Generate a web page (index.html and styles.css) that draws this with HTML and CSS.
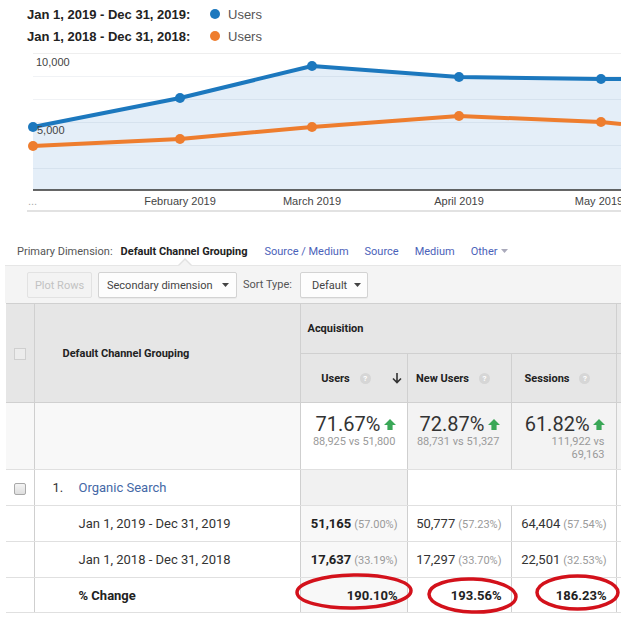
FILE: index.html
```html
<!DOCTYPE html>
<html>
<head>
<meta charset="utf-8">
<link rel="stylesheet" href="styles.css">
</head>
<body>
<div class="page">
  <div class="legend">
    <div class="legend-row"><span class="legend-label">Jan 1, 2019 - Dec 31, 2019:</span><span class="dot dot-blue"></span><span class="legend-series">Users</span></div>
    <div class="legend-row"><span class="legend-label">Jan 1, 2018 - Dec 31, 2018:</span><span class="dot dot-orange"></span><span class="legend-series">Users</span></div>
  </div>

  <svg class="chart" width="621" height="166" viewBox="0 47 621 166">
    <line class="grid-top" x1="33" y1="53.5" x2="621" y2="53.5"/>
    <polygon class="area" points="33,127 180,98 312,66 459,77 601,79 621,79 621,190 33,190"/>
    <line class="grid" x1="33" y1="76.5" x2="621" y2="76.5"/>
    <line class="grid" x1="33" y1="99.5" x2="621" y2="99.5"/>
    <line class="grid" x1="33" y1="122.5" x2="621" y2="122.5"/>
    <line class="grid" x1="33" y1="145.5" x2="621" y2="145.5"/>
    <line class="grid" x1="33" y1="168.5" x2="621" y2="168.5"/>
    <polyline class="line-orange" points="33,146 180,139 312,127 459,116 601,122 621,124"/>
    <polyline class="line-blue" points="33,127 180,98 312,66 459,77 601,79 621,79"/>
    <circle class="pt-orange" cx="33" cy="146" r="5"/>
    <circle class="pt-orange" cx="180" cy="139" r="5"/>
    <circle class="pt-orange" cx="312" cy="127" r="5"/>
    <circle class="pt-orange" cx="459" cy="116" r="5"/>
    <circle class="pt-orange" cx="601" cy="122" r="5"/>
    <circle class="pt-blue" cx="33" cy="127" r="5"/>
    <circle class="pt-blue" cx="180" cy="98" r="5"/>
    <circle class="pt-blue" cx="312" cy="66" r="5"/>
    <circle class="pt-blue" cx="459" cy="77" r="5"/>
    <circle class="pt-blue" cx="601" cy="79" r="5"/>
    <line class="axis" x1="33" y1="190" x2="621" y2="190"/>
    <text class="y-label" x="36" y="66">10,000</text>
    <text class="y-label" x="37" y="134">5,000</text>
    <text class="dots-label" x="28" y="205">...</text>
    <text class="x-label" x="180" y="205">February 2019</text>
    <text class="x-label" x="312" y="205">March 2019</text>
    <text class="x-label" x="459" y="205">April 2019</text>
    <text class="x-label" x="599" y="205">May 2019</text>
    <line class="axis-bottom" x1="27" y1="211" x2="621" y2="211"/>
  </svg>

  <div class="dims">
    <span class="dim-label">Primary Dimension:</span>
    <span class="dim-current">Default Channel Grouping</span>
    <span class="dim-link">Source / Medium</span>
    <span class="dim-link">Source</span>
    <span class="dim-link">Medium</span>
    <span class="dim-link">Other<svg class="dim-caret" width="7" height="4" viewBox="0 0 7 4"><path d="M0 0h7L3.5 4z"/></svg></span>
  </div>

  <div class="toolbar">
    <span class="btn btn-disabled">Plot Rows</span>
    <span class="btn btn-secondary">Secondary dimension<svg class="caret" width="7" height="4" viewBox="0 0 7 4"><path d="M0 0h7L3.5 4z"/></svg></span>
    <span class="sort-label">Sort Type:</span>
    <span class="btn btn-sort">Default<svg class="caret" width="7" height="4" viewBox="0 0 7 4"><path d="M0 0h7L3.5 4z"/></svg></span>
  </div>

  <table class="report">
    <colgroup>
      <col class="c-cb"><col class="c-dim"><col class="c-users"><col class="c-new"><col class="c-sess"><col class="c-extra">
    </colgroup>
    <thead>
      <tr class="h1">
        <th class="cb-head" rowspan="2"><span class="cb cb-head-box"></span></th>
        <th class="dim-head" rowspan="2">Default Channel Grouping</th>
        <th class="group" colspan="3">Acquisition</th>
        <th class="extra"></th>
      </tr>
      <tr class="h2">
        <th class="metric"><div class="mh mh-sorted"><span class="mh-label">Users<span class="help">?</span></span><svg class="sort-arrow" width="10" height="12" viewBox="0 0 10 12"><path d="M5 1v9.5M1 6.5l4 4 4-4"/></svg></div></th>
        <th class="metric"><div class="mh"><span class="mh-label">New Users<span class="help">?</span></span></div></th>
        <th class="metric"><div class="mh"><span class="mh-label">Sessions<span class="help">?</span></span></div></th>
        <th class="extra"></th>
      </tr>
    </thead>
    <tbody>
      <tr class="summary">
        <td class="sum-blank"></td>
        <td class="sum-blank"></td>
        <td class="sum sum-white"><div class="sum-main">71.67%<svg class="up" width="12" height="11" viewBox="0 0 12 11"><path d="M6 0l6 6H8.6v5H3.4V6H0z"/></svg></div><div class="sum-sub">88,925 vs 51,800</div></td>
        <td class="sum"><div class="sum-main">72.87%<svg class="up" width="12" height="11" viewBox="0 0 12 11"><path d="M6 0l6 6H8.6v5H3.4V6H0z"/></svg></div><div class="sum-sub">88,731 vs 51,327</div></td>
        <td class="sum"><div class="sum-main">61.82%<svg class="up" width="12" height="11" viewBox="0 0 12 11"><path d="M6 0l6 6H8.6v5H3.4V6H0z"/></svg></div><div class="sum-sub">111,922 vs<br>69,163</div></td>
        <td class="sum"></td>
      </tr>
      <tr class="item">
        <td class="cb-cell"><span class="cb cb-row"></span></td>
        <td class="dim"><span class="idx">1.</span><span class="item-link">Organic Search</span></td>
        <td class="val-grey"></td>
        <td class="blank-span" colspan="2"></td>
        <td class="extra-cell"></td>
      </tr>
      <tr class="data">
        <td class="cb-cell"></td>
        <td class="dim dim-indent">Jan 1, 2019 - Dec 31, 2019</td>
        <td class="val val-users"><b>51,165</b><span class="pct">(57.00%)</span></td>
        <td class="val">50,777<span class="pct">(57.23%)</span></td>
        <td class="val">64,404<span class="pct">(57.54%)</span></td>
        <td class="extra-cell"></td>
      </tr>
      <tr class="data">
        <td class="cb-cell"></td>
        <td class="dim dim-indent">Jan 1, 2018 - Dec 31, 2018</td>
        <td class="val val-users"><b>17,637</b><span class="pct">(33.19%)</span></td>
        <td class="val">17,297<span class="pct">(33.70%)</span></td>
        <td class="val">22,501<span class="pct">(32.53%)</span></td>
        <td class="extra-cell"></td>
      </tr>
      <tr class="change">
        <td class="cb-cell"></td>
        <td class="dim dim-indent dim-bold">% Change</td>
        <td class="val val-users val-bold">190.10%</td>
        <td class="val val-bold">193.56%</td>
        <td class="val val-bold">186.23%</td>
        <td class="extra-cell"></td>
      </tr>
    </tbody>
  </table>

  <svg class="marks" width="621" height="617" viewBox="0 0 621 617">
    <ellipse cx="354" cy="591.5" rx="57" ry="16.5" transform="rotate(-1 354 591.5)"/>
    <ellipse cx="472.5" cy="595.5" rx="43.5" ry="16.5" transform="rotate(2 472.5 595.5)"/>
    <ellipse cx="577.5" cy="592.5" rx="40.5" ry="16.5"/>
  </svg>
</div>
</body>
</html>
```

FILE: styles.css
```css
body {
  margin: 0;
  background: #fff;
  font-family: Roboto, "Liberation Sans", sans-serif;
  color: #333;
}

.page {
  position: relative;
  width: 621px;
  height: 617px;
  overflow: hidden;
}

/* legend */
.legend {
  padding-top: 3px;
  font-family: "Liberation Sans", Arial, sans-serif;
  font-size: 13px;
}
.legend-row {
  display: flex;
  align-items: center;
  height: 22px;
  padding-left: 27px;
}
.legend-label {
  width: 183px;
  font-weight: bold;
  color: #222;
}
.dot {
  width: 10px;
  height: 10px;
  border-radius: 50%;
  margin-right: 8px;
}
.dot-blue { background: #1c78be; }
.dot-orange { background: #ee7d2e; }
.legend-series { color: #555; }

/* chart */
.chart { display: block; }
.chart .grid-top { stroke: #eeeeee; stroke-width: 1; }
.chart .grid { stroke: rgba(0, 40, 80, 0.06); stroke-width: 1; }
.chart .area { fill: #e4eef8; }
.line-blue, .line-orange {
  fill: none;
  stroke-width: 4;
  stroke-linejoin: round;
}
.line-blue { stroke: #1c78be; }
.line-orange { stroke: #ee7d2e; }
.pt-blue { fill: #1c78be; }
.pt-orange { fill: #ee7d2e; }
.axis { stroke: #333; stroke-width: 1.5; }
.axis-bottom { stroke: #e2e2e2; stroke-width: 2; }
.y-label, .x-label, .dots-label {
  font-family: "Liberation Sans", Arial, sans-serif;
  font-size: 11px;
  fill: #444;
}
.x-label { text-anchor: middle; }
.dots-label { fill: #aaa; }

/* primary dimension */
.dims {
  display: flex;
  align-items: center;
  height: 24px;
  margin-top: 26px;
  padding-left: 17px;
  font-size: 11px;
}
.dim-label { color: #555; margin-right: 8px; }
.dim-current { font-weight: bold; color: #222; margin-right: 17px; }
.dim-link { color: #4b62b9; margin-right: 16px; display: flex; align-items: center; }
.dim-caret { margin-left: 4px; fill: #aab; }

/* toolbar */
.toolbar {
  position: relative;
  margin-top: 2px;
  margin-left: 5px;
  height: 38px;
  box-sizing: border-box;
  padding: 6px 0 0 22px;
  background: #f4f4f4;
  border-top: 1px solid #e6e6e6;
  display: flex;
  align-items: flex-start;
}
.toolbar::before {
  content: "";
  position: absolute;
  left: 173px;
  top: -8px;
  border-left: 7px solid transparent;
  border-right: 7px solid transparent;
  border-bottom: 7px solid #e2e2e2;
}
.toolbar::after {
  content: "";
  position: absolute;
  left: 174px;
  top: -6px;
  border-left: 6px solid transparent;
  border-right: 6px solid transparent;
  border-bottom: 6px solid #f4f4f4;
}
.btn {
  display: flex;
  align-items: center;
  height: 26px;
  box-sizing: border-box;
  border: 1px solid #d3d3d3;
  border-radius: 2px;
  background: #fdfdfd;
  font-size: 11px;
  color: #444;
  padding: 0 7px 0 8px;
  box-shadow: 0 1px 0 rgba(0, 0, 0, 0.04);
}
.btn-disabled {
  width: 65px;
  justify-content: center;
  padding: 0;
  color: #c2c2c2;
  background: #f3f3f3;
  border-color: #e2e2e2;
  box-shadow: none;
}
.btn-secondary { margin-left: 6px; width: 139px; justify-content: space-between; }
.btn-sort { width: 68px; padding-left: 11px; padding-right: 6px; justify-content: space-between; }
.caret { fill: #444; }
.sort-label {
  font-size: 11px;
  color: #555;
  line-height: 26px;
  margin: 0 8px 0 6px;
}

/* table */
.report {
  margin-left: 6px;
  border-collapse: collapse;
  table-layout: fixed;
  width: 630px;
  font-size: 13px;
}
.c-cb { width: 28px; }
.c-dim { width: 266px; }
.c-users { width: 107px; }
.c-new { width: 104px; }
.c-sess { width: 105px; }
.c-extra { width: 20px; }

.report th, .report td { padding: 0; }
.report th {
  background: #e6e6e6;
  border: 1px solid #d0d0d0;
  font-size: 11px;
  font-weight: bold;
  color: #222;
}
.report th.cb-head { border-left: none; }
.h1 { height: 50px; }
.h2 { height: 49px; }
.report .dim-head { text-align: left; padding-left: 28px; }
.report .group { text-align: left; padding-left: 7px; }

.cb {
  display: inline-block;
  width: 12px;
  height: 12px;
  box-sizing: border-box;
  vertical-align: middle;
}
.cb-head-box {
  border: 1px solid #cfcfcf;
  background: #ececec;
}
.cb-row {
  border: 1px solid #a9a9a9;
  border-radius: 2px;
  background: linear-gradient(#f4f4f4, #dedede);
}

.mh {
  display: flex;
  align-items: center;
  justify-content: center;
  padding-right: 12px;
}
.mh-sorted {
  display: grid;
  grid-template-columns: 1fr auto;
  padding-right: 5px;
}
.mh-sorted .mh-label { justify-self: center; }
.mh-label { display: flex; align-items: center; }
.help {
  display: inline-flex;
  align-items: center;
  justify-content: center;
  width: 11px;
  height: 11px;
  border-radius: 50%;
  background: #d6d6d6;
  color: #fff;
  font-size: 8px;
  font-weight: bold;
  margin-left: 10px;
}
.sort-arrow { fill: none; stroke: #333; stroke-width: 1.6; }

.report td {
  border-left: 1px solid #cfcfcf;
  border-right: 1px solid #cfcfcf;
  border-top: 1px solid #e0e0e0;
  border-bottom: 1px solid #e0e0e0;
}
.report td:first-child { border-left: none; }

.summary { height: 67px; }
.sum-blank { background: #f8f8f8; }
.report .sum {
  background: #f3f3f3;
  vertical-align: top;
  text-align: right;
  padding: 10px 11px 0 0;
}
.report .sum-white { background: #fff; }
.sum-main {
  display: flex;
  align-items: center;
  justify-content: flex-end;
  font-size: 20px;
  line-height: 22px;
  color: #333;
}
.up { fill: #3aa757; margin-left: 3px; }
.sum-sub {
  font-size: 11px;
  line-height: 13px;
  color: #9a9a9a;
}

.item { height: 36px; }
.data { height: 36px; }
.change { height: 35px; }
.cb-cell { text-align: center; }
.dim { color: #333; }
.idx { display: inline-block; width: 26px; padding-left: 18px; color: #333; }
.item-link { color: #4468a6; }
.val-grey { background: #f1f1f1; }
.report .dim-indent { padding-left: 44px; }
.dim-bold { font-weight: bold; color: #222; }
.report .val {
  text-align: right;
  padding-right: 9px;
  color: #333;
}
.val b { color: #222; }
.report .val-users { background: #f8f8f8; }
.report .val-bold { font-weight: bold; color: #222; }
.pct { font-size: 11px; color: #9a9a9a; margin-left: 3px; }

/* annotations */
.marks {
  position: absolute;
  left: 0;
  top: 0;
  pointer-events: none;
}
.marks ellipse {
  fill: none;
  stroke: #d3111b;
  stroke-width: 3.5;
}
```
